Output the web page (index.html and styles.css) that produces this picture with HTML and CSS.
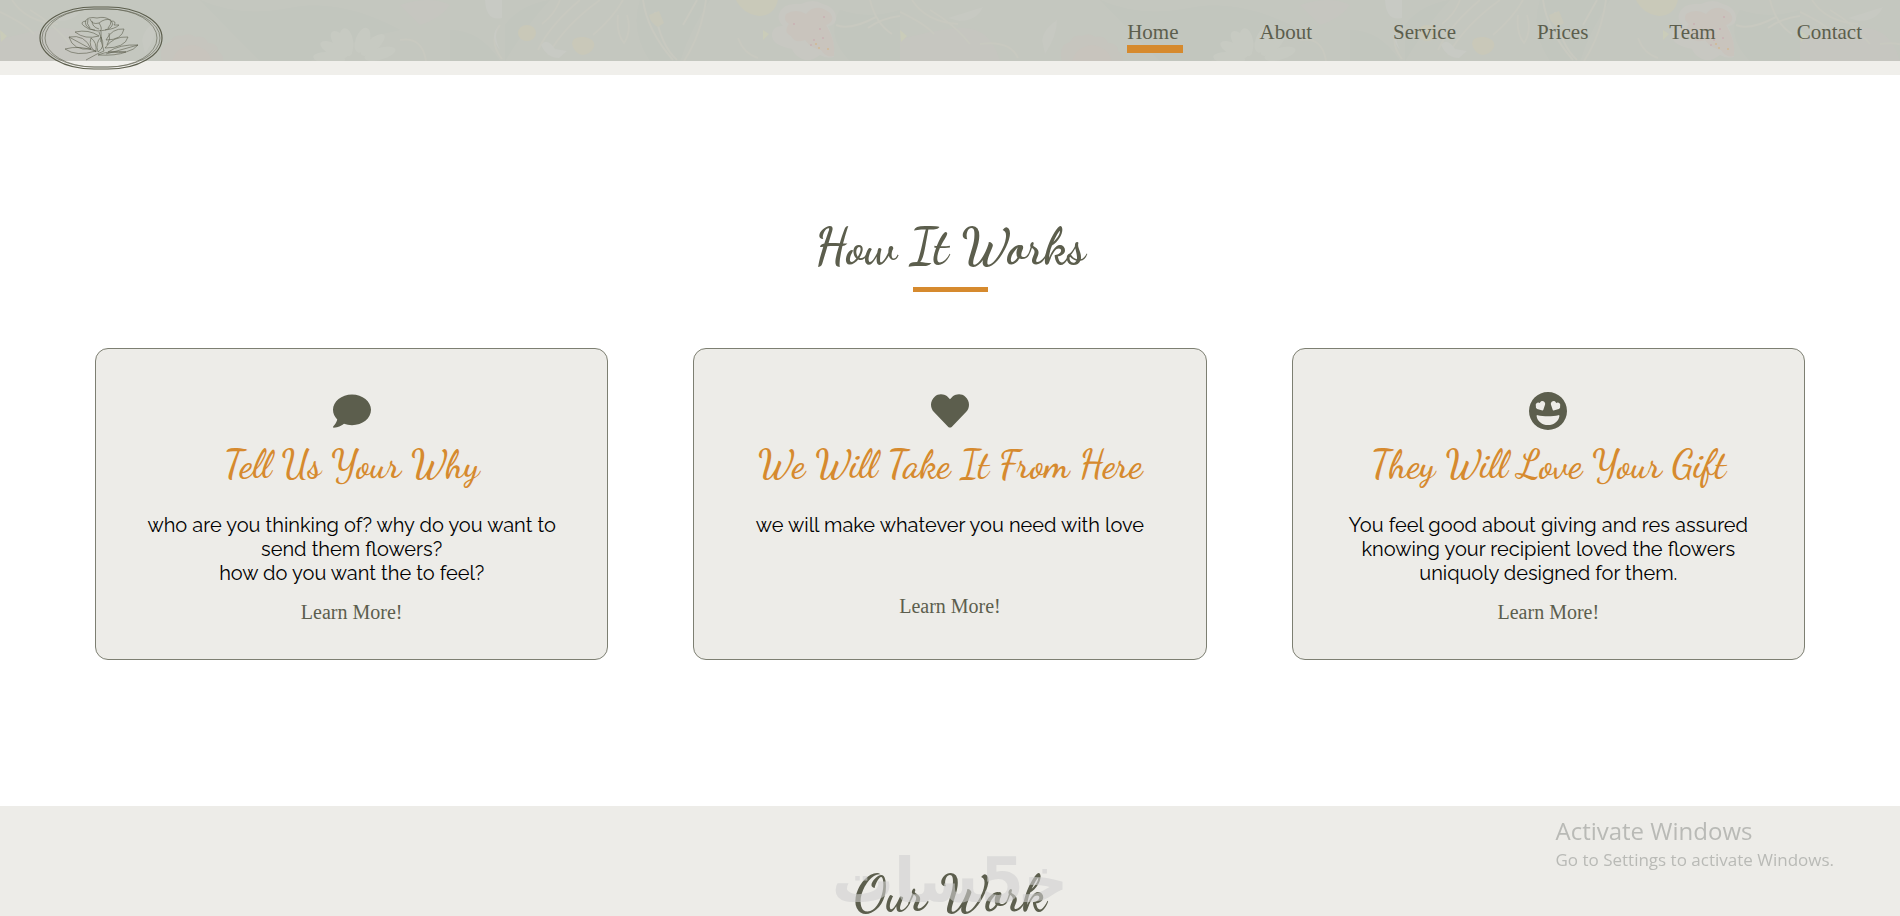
FILE: index.html
```html
<!DOCTYPE html>
<html lang="en">
<head>
    <meta charset="UTF-8">
    <meta name="viewport" content="width=device-width, initial-scale=1.0">
    <title>Flowers</title>
    <link rel="stylesheet" href="styles.css">
</head>
<body>
    <!-- header -->
    <header class="header">
        <div class="navbar">
            <svg class="pattern" aria-hidden="true">
                <defs>
                    <pattern id="flowers" width="900" height="61" patternUnits="userSpaceOnUse">
                        <rect width="900" height="61" fill="#c4c7bf"/>
                        <!-- darker leaves -->
                        <path d="M200 0q40 18 90 8t110 22q-50 10-90 31h-50q-30-30-60-61zM450 30q30 0 50 31h-50zM505 25q15-20 45-25-20 20-45 61zM640 0h70q-20 30-30 61h-30q-20-30-10-61zM840 10q30 10 60 0v51h-50q-25-25-10-51z" fill="#c2c6be"/>
                        <path d="M0 40q30-10 60-12t40 33H0zM400 5q30-10 50 0-10 14-30 20z" fill="#c6c6c0"/>
                        <!-- stems -->
                        <g fill="none" stroke="#c8c9c0" stroke-width="2">
                            <path d="M580 0q-30 25-42 50M600 0q-35 25-52 55M560 0q-5 14-18 24M623 0q-10 18-30 35M618 15q-2 18 6 28 8-12 3-28M643 0q4 30 30 60M655 12q6 34 22 48M706 0q-5 35-22 61M697 0l-14 25M500 25q-12 16 2 34M400 40q22-4 26 21M738 38q6 16 20 20"/>
                            <path d="M0 12q25 12 34 22M30 10q24 14 40 34M12 0q14 22 46 24M868 28q14-10 32-12M836 25q14 6 40-8M870 0q6 24 22 34M80 44q30-4 38 14"/>
                        </g>
                        <path d="M48 18l35-11q-6 14-24 14zM142 40q2-12 15-20 0 16-12 34z" fill="#c7c9c2"/>
                        <path d="M0 30l7 6-6 6zM763 30l6 4-6 6z" fill="#caccb9"/>
                        <!-- daisy -->
                        <g fill="#c7cac2" transform="translate(355 61)">
                            <ellipse cx="-6" cy="-20" rx="7" ry="14" transform="rotate(-8)"/>
                            <ellipse cx="0" cy="-22" rx="7" ry="13" transform="rotate(20)"/>
                            <ellipse cx="0" cy="-22" rx="7" ry="15" transform="rotate(-38)"/>
                            <ellipse cx="0" cy="-24" rx="6" ry="15" transform="rotate(48)"/>
                            <ellipse cx="0" cy="-24" rx="6" ry="15" transform="rotate(-62)"/>
                            <ellipse cx="0" cy="-26" rx="6" ry="16" transform="rotate(74)"/>
                            <ellipse cx="0" cy="-26" rx="6" ry="16" transform="rotate(-84)"/>
                        </g>
                        <path d="M162 61q-4-16 8-19 4-8 12-6 8-4 13 1 10-2 13 6 10 0 10 8 6 4 5 10z" fill="#c6c5be"/>
                        <path d="M172 61q4-14 20-16 16 2 20 16z" fill="#c8c4bd"/>
                        <path d="M485 0h17v18q-16 4-17-18z" fill="#c8cac4"/>
                        <path d="M500 24q-8 10 0 26-12-14 0-26zM541 45q6-8 14 4l12 2-8 7q-12 0-18-13z" fill="#c8cac4"/>
                        <ellipse cx="527" cy="33" rx="9" ry="8" fill="#c9c8b8"/>
                        <path d="M572 44q0-8 12-7 12 2 10 10-4 8-12 8-8-2-10-11z" fill="#c9c8b9"/>
                        <path d="M649 15l10-4 5 12-6 4q-8-4-9-12z" fill="#c8c8ba"/>
                        <path d="M736 0h42q-4 16-19 16-16-2-23-16z" fill="#c9c9b9"/>
                        <!-- red blossom -->
                        <path d="M779 14q4-12 22-10 12-6 22 0 14 4 13 16-2 6-8 6 8 16 6 31-8 2-14-2-10 8-18 4-8-4-10-10-22-4-20-16 2-8 11-7-6-6-4-12z" fill="#c8c8c2"/>
                        <path d="M786 14q10-6 20 0 10-12 24-1 6 8-4 12 10 16 8 31-8 2-13-6-10-2-16-10-10 4-14-4-8-4-2-12-6-4-3-10z" fill="#c9c4bd"/>
                        <g fill="#c9b0b2">
                            <circle cx="794" cy="24" r="1"/><circle cx="824" cy="17" r="1"/><circle cx="820" cy="29" r="1"/><circle cx="814" cy="40" r="1"/><circle cx="823" cy="38" r="1"/><circle cx="811" cy="45" r="1"/>
                        </g>
                        <path d="M815 43h2v2h-2zM827 48h2v2h-2zM818 47h2v2h-2z" fill="#cfbb9d"/>
                    </pattern>
                </defs>
                <rect width="100%" height="100%" fill="url(#flowers)"/>
            </svg>
            <a class="logo" href="#" aria-label="Flowers">
                <svg viewBox="38 5 126 64" fill="none" stroke="#5c5e4d">
                    <rect x="40" y="6" width="122" height="62" rx="54" ry="31" stroke-width="1.2"/>
                    <rect x="42" y="8" width="118" height="58" rx="52" ry="29" stroke-width=".6"/>
                    <rect x="45" y="8" width="112" height="58" rx="49" ry="29" stroke-width=".6"/>
                    <g stroke-width=".6">
                        <path d="M89 17q4-1 8 0 8-2 13 2 5 4 0 8-5 3-12 3-9-1-12-6-2-5 3-7zM86 20q-7 1-2 5 4 4 11 4M111 20q6 0 3 4h5q-4 4-14 5M90 18q2 6 9 4 6-5 12-3M99 22q4 6 1 8M92 20q0 6 7 8M88 18q-2 5 2 9M108 27q3-3 3-7"/>
                        <path d="M101 30q-1 11 3 20l-7 3-11 6M99 31q3 6 2 10"/>
                        <path d="M75 31q14-3 24 4-14 4-24-4z"/>
                        <path d="M69 36q16-3 22 12-18 2-22-12zM69 36l22 12"/>
                        <path d="M65 48q14-4 31 2-20 6-31-2z"/>
                        <path d="M91 37q6 4 5 14-8-5-5-14zM101 36q-6 6-3 15 8-5 3-15z"/>
                        <path d="M124 28q-12-1-18 11 16 0 18-11z"/>
                        <path d="M128 36q-15-1-23 11 20 0 23-11zM109 32q2 6-2 12"/>
                        <path d="M138 44q-18-1-30 7 22 3 30-7zM138 44l-32 9"/>
                        <path d="M126 51q-16-2-28 3 18 1 28-3z"/>
                    </g>
                </svg>
            </a>
            <nav>
                <ul class="menu">
                    <li><a class="active" href="#">Home</a></li>
                    <li><a href="#">About</a></li>
                    <li><a href="#">Service</a></li>
                    <li><a href="#">Prices</a></li>
                    <li><a href="#">Team</a></li>
                    <li><a href="#">Contact</a></li>
                </ul>
            </nav>
        </div>
    </header>

    <!-- how it works -->
    <section class="works">
        <h2 class="underlined">How It Works</h2>
        <div class="cards">
            <div class="card">
                <svg class="icon" viewBox="0 0 512 512"><path d="M256 32C114.600 32 0 125.100 0 240c0 49.600 21.400 95 57 130.700C44.500 421.100 2.700 466 2.200 466.500c-2.200 2.300-2.800 5.700-1.500 8.700S4.800 480 8 480c66.300 0 116-31.800 140.600-51.400 32.700 12.300 69 19.400 107.400 19.400 141.400 0 256-93.100 256-208S397.400 32 256 32z"/></svg>
                <h3>Tell Us Your Why</h3>
                <p>who are you thinking of? why do you want to send them flowers?<br>how do you want the to feel?</p>
                <a href="#">Learn More!</a>
            </div>
            <div class="card">
                <svg class="icon" viewBox="0 0 512 512"><path d="M462.300 62.600C407.500 15.900 326 24.300 275.700 76.200L256 96.500l-19.700-20.300C186.100 24.300 104.500 15.900 49.700 62.600c-62.800 53.600-66.100 149.800-9.900 207.900l193.500 199.800c12.500 12.900 32.800 12.900 45.300 0l193.500-199.800c56.300-58.100 53-154.300-9.800-207.900z"/></svg>
                <h3>We Will Take It From Here</h3>
                <p>we will make whatever you need with love</p>
                <a class="short" href="#">Learn More!</a>
            </div>
            <div class="card">
                <svg class="icon" viewBox="0 0 496 496"><path fill-rule="evenodd" d="M248 0a248 248 0 1 0 0 496 248 248 0 0 0 0-496zM90 184c-8-24 6-44 26-47 10-2 20 2 26 6 2-8 8-16 18-21 20-9 42 2 49 22 3 8 2 15 0 22l-22 67c-2 6-6 8-12 7l-69-18c-8-4-13-11-16-19zM406 184c8-24-6-44-26-47-10-2-20 2-26 6-2-8-8-16-18-21-20-9-42 2-49 22-3 8-2 15 0 22l22 67c2 6 6 8 12 7l69-18c8-4 13-11 16-19zM99 312q0-12 13-10c80 20 192 20 272 0q14-2 13 10c-9 70-75 120-149 120s-140-50-149-120z"/></svg>
                <h3>They Will Love Your Gift</h3>
                <p>You feel good about giving and res assured knowing your recipient loved the flowers uniquoly designed for them.</p>
                <a href="#">Learn More!</a>
            </div>
        </div>
    </section>

    <!-- our work -->
    <section class="gallery">
        <h2>Our Work</h2>
    </section>

    <div class="watermark" lang="ar" dir="rtl">خ&zwj;5&zwj;سات</div>
    <div class="activate">
        <p class="activate-title">Activate Windows</p>
        <p>Go to Settings to activate Windows.</p>
    </div>
</body>
</html>
```

FILE: styles.css
```css
* {
    margin: 0;
    padding: 0;
    box-sizing: border-box;
}
body {
    font-family: "Liberation Serif", "Times New Roman", serif;
    background-color: #fff;
    color: #000;
}
a {
    color: #5c5e4d;
    text-decoration: none;
}

/* header */
.header {
    height: 75px;
    background-color: #f0efeb;
}
.navbar {
    position: relative;
    display: flex;
    justify-content: space-between;
    align-items: flex-start;
    height: 61px;
    padding: 6px 38px 0;
}
.pattern {
    position: absolute;
    top: 0;
    left: 0;
    width: 100%;
    height: 100%;
}
.logo {
    position: relative;
    width: 126px;
    height: 64px;
}
.logo svg {
    display: block;
    width: 100%;
    height: 100%;
}
.menu {
    position: relative;
    display: flex;
    gap: 77px;
    list-style: none;
    padding-top: 14px;
}
.menu a {
    display: block;
    font-size: 21px;
    line-height: 25px;
    padding-right: 4px;
}
.menu .active {
    border-bottom: 8px solid #d68a2e;
}
.menu li:last-child a {
    padding-right: 0;
}

/* sections */
h2, h3 {
    font-family: "Dancing Script", "Liberation Serif", cursive;
    font-weight: bold;
    text-align: center;
}
h2 {
    font-size: 50px;
    line-height: 60px;
    color: #5c5e4d;
}
.works {
    padding: 142px 5% 146px;
}
.underlined::after {
    content: "";
    display: block;
    width: 75px;
    height: 5px;
    margin: 10px auto 0;
    background-color: #d68a2e;
}
.cards {
    display: grid;
    grid-template-columns: repeat(3, 1fr);
    gap: 85px;
    margin-top: 56px;
}
.card {
    display: flex;
    flex-direction: column;
    align-items: center;
    min-height: 312px;
    padding: 43px 40px 32px;
    border: 1px solid #7d7f72;
    border-radius: 13px;
    background-color: #edece8;
    text-align: center;
}
.icon {
    width: 38px;
    height: 38px;
    fill: #5c5e4d;
}
h3 {
    font-size: 38px;
    font-weight: 600;
    line-height: 46px;
    margin: 12px 0 25px;
    color: #d68a2e;
    white-space: nowrap;
}
.card p {
    font-family: Raleway, Lato, sans-serif;
    font-size: 20px;
    line-height: 24px;
    margin-bottom: 15px;
}
.card a {
    font-size: 20px;
    line-height: 24px;
}
.card .short {
    margin-top: 42px;
}
.gallery {
    padding: 58px 5%;
    background-color: #edece8;
}

/* overlays */
.watermark {
    position: fixed;
    bottom: 0;
    left: 0;
    width: 100%;
    text-align: center;
    font-family: "DejaVu Sans", sans-serif;
    font-weight: bold;
    font-size: 62px;
    line-height: 70px;
    color: #d0d0d0;
    opacity: .6;
}
.activate {
    position: fixed;
    right: 66px;
    bottom: 43px;
    font-family: "Segoe UI", "Open Sans", sans-serif;
    font-size: 17px;
    line-height: 26px;
    color: #b9bab6;
}
.activate-title {
    font-size: 24px;
    line-height: 32px;
}
```
